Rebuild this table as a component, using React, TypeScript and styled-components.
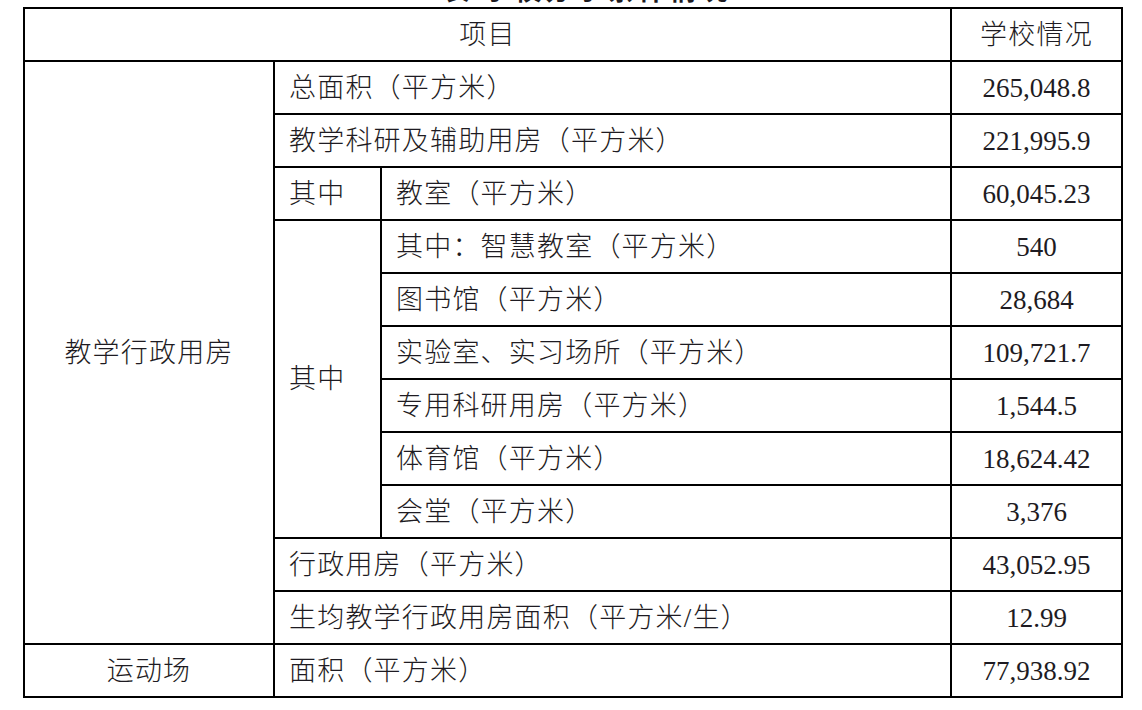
import React from "react";
import styled, { createGlobalStyle } from "styled-components";

const Global = createGlobalStyle`
  html, body { margin: 0; padding: 0; background: #ffffff; }
  body { font-family: "Liberation Serif", "Noto Sans CJK SC", serif; color: #1c1a1f; }
`;

const Page = styled.div`
  width: 1142px;
  height: 710px;
  padding-left: 23px;
  box-sizing: border-box;
  overflow: hidden;
`;

const TitleClip = styled.div`
  width: 1098px;
  height: 7px;
  overflow: hidden;
`;

const Title = styled.div`
  margin-top: -26px;
  padding-left: 30px;
  text-align: center;
  font-size: 27px;
  line-height: 30px;
  font-weight: 700;
  letter-spacing: 4px;
  font-family: "Noto Sans CJK SC", sans-serif;
`;

const Table = styled.table`
  border-collapse: collapse;
  table-layout: fixed;
  width: 1098px;
  font-size: 27px;
`;

const Row = styled.tr`
  height: 53px;
`;

const Cell = styled.td<{ $align?: "left" | "center" }>`
  border: 2px solid #000;
  padding: 0 0 0 ${(p) => (p.$align === "center" ? "0" : "14px")};
  text-align: ${(p) => p.$align ?? "left"};
  vertical-align: middle;
  line-height: 30px;
  white-space: nowrap;
  color: #1e1b22;
  font-weight: 300;
  letter-spacing: 1.2px;
`;

const HeadCell = styled(Cell).attrs({ as: "th" })``;

const Value = styled(Cell).attrs({ $align: "center" as const })`
  padding: 0;
  font-weight: 400;
  letter-spacing: 0;
`;

type R = { label: string; value: string };

const inner: R[] = [
  { label: "其中：智慧教室（平方米）", value: "540" },
  { label: "图书馆（平方米）", value: "28,684" },
  { label: "实验室、实习场所（平方米）", value: "109,721.7" },
  { label: "专用科研用房（平方米）", value: "1,544.5" },
  { label: "体育馆（平方米）", value: "18,624.42" },
  { label: "会堂（平方米）", value: "3,376" },
];

export default function App() {
  return (
    <Page>
      <Global />
      <TitleClip>
        <Title>表 学校办学条件情况</Title>
      </TitleClip>
      <Table>
        <colgroup>
          <col style={{ width: 250 }} />
          <col style={{ width: 107 }} />
          <col style={{ width: 570 }} />
          <col style={{ width: 171 }} />
        </colgroup>
        <tbody>
          <Row>
            <HeadCell colSpan={3} $align="center">
              项目
            </HeadCell>
            <HeadCell $align="center">学校情况</HeadCell>
          </Row>
          <Row>
            <Cell rowSpan={11} $align="center">教学行政用房</Cell>
            <Cell colSpan={2}>总面积（平方米）</Cell>
            <Value>265,048.8</Value>
          </Row>
          <Row>
            <Cell colSpan={2}>教学科研及辅助用房（平方米）</Cell>
            <Value>221,995.9</Value>
          </Row>
          <Row>
            <Cell>其中</Cell>
            <Cell>教室（平方米）</Cell>
            <Value>60,045.23</Value>
          </Row>
          {inner.map((r, i) => (
            <Row key={r.label}>
              {i === 0 && <Cell rowSpan={6}>其中</Cell>}
              <Cell>{r.label}</Cell>
              <Value>{r.value}</Value>
            </Row>
          ))}
          <Row>
            <Cell colSpan={2}>行政用房（平方米）</Cell>
            <Value>43,052.95</Value>
          </Row>
          <Row>
            <Cell colSpan={2}>生均教学行政用房面积（平方米/生）</Cell>
            <Value>12.99</Value>
          </Row>
          <Row>
            <Cell $align="center">运动场</Cell>
            <Cell colSpan={2}>面积（平方米）</Cell>
            <Value>77,938.92</Value>
          </Row>
        </tbody>
      </Table>
    </Page>
  );
}
